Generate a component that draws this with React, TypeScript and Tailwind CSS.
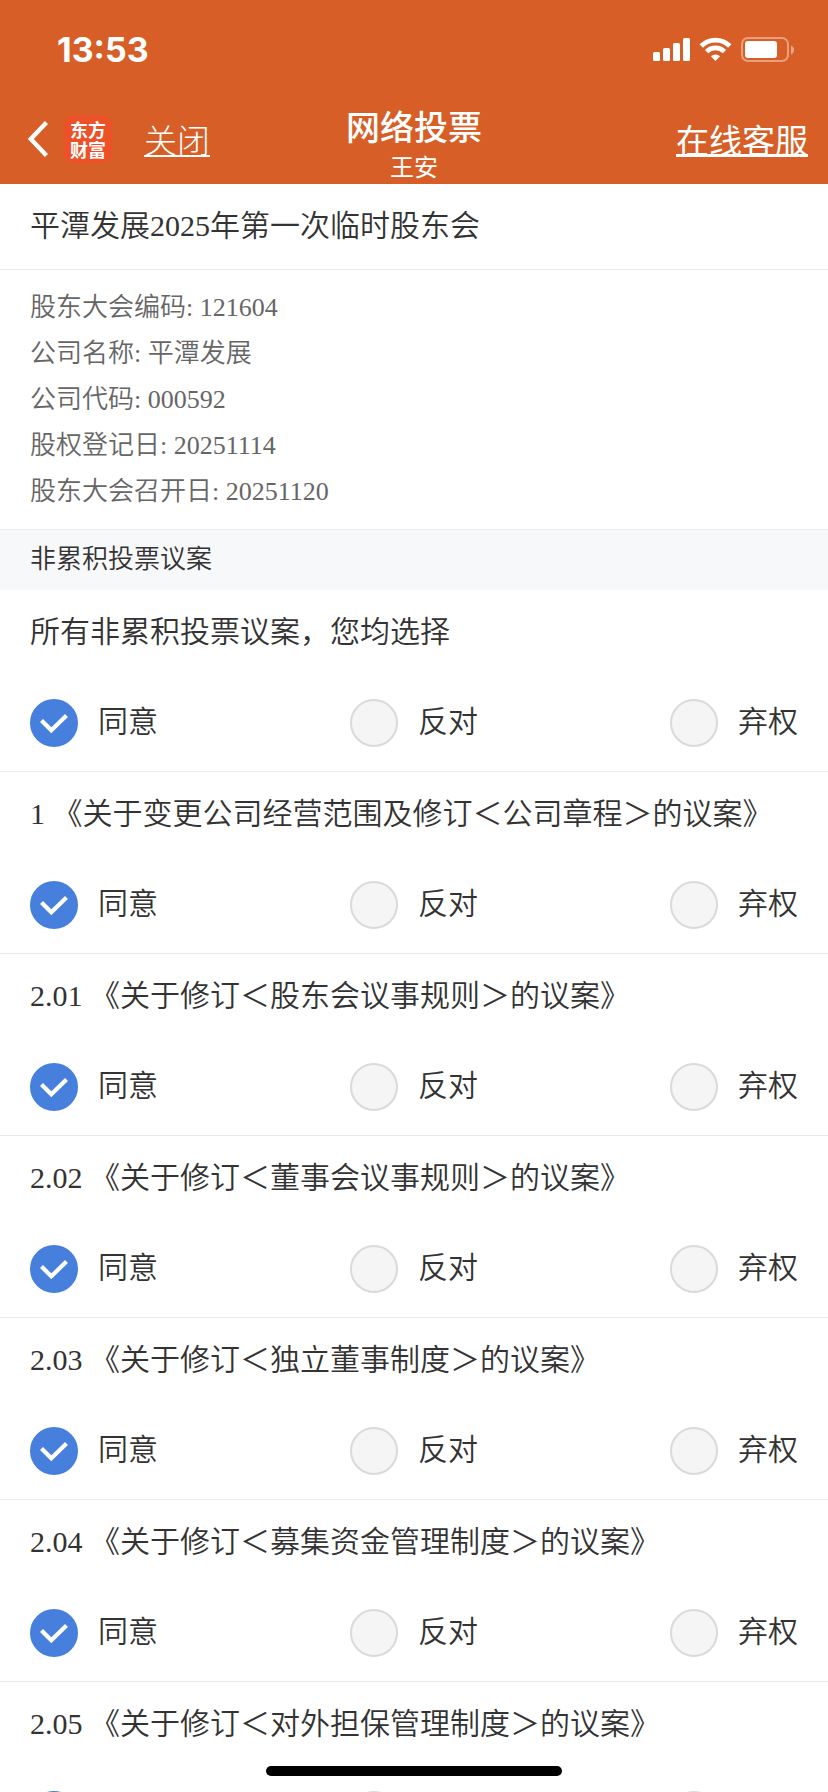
import { useState } from 'react'

const meeting = [
  { label: '股东大会编码', value: '121604' },
  { label: '公司名称', value: '平潭发展' },
  { label: '公司代码', value: '000592' },
  { label: '股权登记日', value: '20251114' },
  { label: '股东大会召开日', value: '20251120' },
]

const proposals = [
  { id: '1', title: '《关于变更公司经营范围及修订＜公司章程＞的议案》' },
  { id: '2.01', title: '《关于修订＜股东会议事规则＞的议案》' },
  { id: '2.02', title: '《关于修订＜董事会议事规则＞的议案》' },
  { id: '2.03', title: '《关于修订＜独立董事制度＞的议案》' },
  { id: '2.04', title: '《关于修订＜募集资金管理制度＞的议案》' },
  { id: '2.05', title: '《关于修订＜对外担保管理制度＞的议案》' },
]

const options = ['同意', '反对', '弃权']

function StatusBar() {
  return (
    <div className="flex h-[100px] items-center justify-between pr-[34px] pl-[57px]">
      <span className="font-['Inter',sans-serif] text-[34px] leading-10 font-bold">13:53</span>
      <svg width="141" height="26" viewBox="0 0 141 26" fill="#fff" aria-hidden="true">
        <rect x="0" y="15" width="7" height="9" rx="1.5" />
        <rect x="10" y="11" width="7" height="13" rx="1.5" />
        <rect x="20" y="6" width="7" height="18" rx="1.5" />
        <rect x="30" y="1" width="7" height="23" rx="1.5" />
        <g fill="none" stroke="#fff" strokeWidth="4.8">
          <path d="M48.2 9a20.2 20.2 0 0 1 28.6 0" />
          <path d="M53.6 14.6a12.6 12.6 0 0 1 17.8 0" />
        </g>
        <path d="M62.5 24l-4.6-4.7a6.6 6.6 0 0 1 9.2 0z" />
        <rect x="89" y="1" width="46" height="23" rx="6" fill="none" stroke="#fff" strokeOpacity=".4" strokeWidth="2" />
        <rect x="92" y="4" width="32" height="17" rx="3" />
        <path d="M138 8.500c4 1.500 4 7.500 0 9z" fillOpacity=".45" />
      </svg>
    </div>
  )
}

function NavBar() {
  return (
    <div className="grid h-[84px] grid-cols-[1fr_auto_1fr] items-start">
      <div className="flex items-center pt-[15px] pl-7">
        <button type="button" aria-label="返回" className="mr-4">
          <svg width="20" height="36" viewBox="0 0 20 36" fill="none" stroke="#fff" strokeWidth="4.4">
            <path d="M18.500 1.500L2.800 18L18.500 34.500" />
          </svg>
        </button>
        <span className="flex h-12 w-12 flex-col items-center justify-center rounded-[10px] bg-[#ec5128] text-[18px] leading-5 font-bold">
          <span>东方</span>
          <span>财富</span>
        </span>
        <a href="#close" className="ml-8 text-[33px] leading-12 font-light underline decoration-2 underline-offset-2">
          关闭
        </a>
      </div>
      <div className="text-center">
        <h1 className="pt-0.5 text-[34px] leading-[48px] font-medium">网络投票</h1>
        <p className="text-[24px] leading-8">王安</p>
      </div>
      <div className="pt-[15px] pr-5 text-right">
        <a href="#service" className="text-[33px] leading-12 underline decoration-[3px] underline-offset-1">
          在线客服
        </a>
      </div>
    </div>
  )
}

interface VoteRowProps {
  name: string
  title: string
  value: string
  onChange: (value: string) => void
}

function VoteRow({ name, title, value, onChange }: VoteRowProps) {
  return (
    <fieldset className="border-b border-[#ebebeb] px-[30px] pb-6">
      <legend className="float-left w-full pt-5 pb-[45px] text-[30px] leading-11 whitespace-pre">{title}</legend>
      <div className="clear-both flex justify-between">
        {options.map((option) => (
          <label key={option} className="flex items-center gap-5 text-[30px]">
            <span className="grid h-12 w-12">
              <input
                type="radio"
                name={name}
                checked={value === option}
                onChange={() => onChange(option)}
                className="peer col-start-1 row-start-1 h-12 w-12 appearance-none rounded-full border-2 border-[#dadada] bg-[#f5f5f5] checked:border-[#477fdd] checked:bg-[#477fdd]"
              />
              <svg
                viewBox="0 0 48 48"
                fill="none"
                stroke="#fff"
                strokeWidth="4.2"
                className="pointer-events-none invisible col-start-1 row-start-1 h-12 w-12 peer-checked:visible"
              >
                <path d="M11.500 21.500L21.300 31.300L36.500 16.500" />
              </svg>
            </span>
            <span className="pb-0.5 leading-11">{option}</span>
          </label>
        ))}
      </div>
    </fieldset>
  )
}

export default function App() {
  const [votes, setVotes] = useState<Record<string, string>>(
    Object.fromEntries(proposals.map((p) => [p.id, '同意'])),
  )
  const first = votes[proposals[0].id]
  const all = proposals.every((p) => votes[p.id] === first) ? first : ''

  return (
    <div className="h-screen overflow-hidden bg-white font-['Liberation_Serif','Noto_Sans_CJK_SC',sans-serif] text-[#333]">
      <header className="bg-[#d75f27] font-['Noto_Sans_CJK_SC',sans-serif] text-white">
        <StatusBar />
        <NavBar />
      </header>

      <main className="font-[350]">
        <h2 className="border-b border-[#ebebeb] px-[30px] pt-5 pb-[21px] text-[30px] leading-11 font-[350]">
          平潭发展2025年第一次临时股东会
        </h2>

        <div className="border-b border-[#ebebeb] px-[30px] pt-[15px] pb-[14px] text-[26px] leading-[46px] text-[#666]">
          {meeting.map((row) => (
            <p key={row.label}>
              {row.label}: {row.value}
            </p>
          ))}
        </div>

        <h3 className="bg-[#f7f8fa] px-[30px] text-[26px] leading-[60px] font-[350]">非累积投票议案</h3>

        <VoteRow
          name="all"
          title="所有非累积投票议案，您均选择"
          value={all}
          onChange={(v) => setVotes(Object.fromEntries(proposals.map((p) => [p.id, v])))}
        />
        {proposals.map((p) => (
          <VoteRow
            key={p.id}
            name={p.id}
            title={`${p.id} ${p.title}`}
            value={votes[p.id]}
            onChange={(v) => setVotes({ ...votes, [p.id]: v })}
          />
        ))}
      </main>

      <div className="fixed bottom-4 left-1/2 h-[10px] w-[296px] -translate-x-1/2 rounded-full bg-black" />
    </div>
  )
}
